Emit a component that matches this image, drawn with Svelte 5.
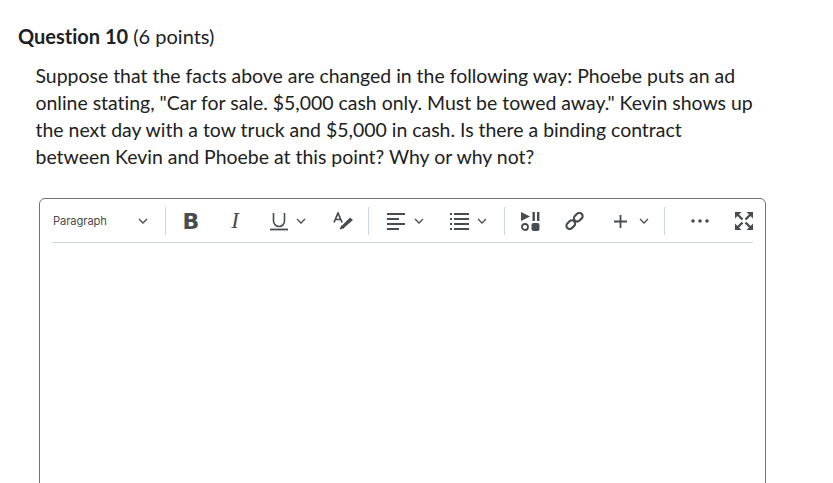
<script>
  let question = 10;
  let points = 6;
</script>

{#snippet chevron()}
  <svg class="chev" width="10" height="6" viewBox="0 0 10 6"><path d="M1 1l4 4 4-4" fill="none" stroke="#494c4e" stroke-width="1.3"/></svg>
{/snippet}

<main class="page">
  <h2 class="title"><b>Question {question}</b> ({points} points)</h2>
  <p class="text">Suppose that the facts above are changed in the following way: Phoebe puts an ad online stating, "Car for sale. $5,000 cash only. Must be towed away." Kevin shows up the next day with a tow truck and $5,000 in cash. Is there a binding contract between Kevin and Phoebe at this point? Why or why not?</p>

  <section class="editor">
    <div class="toolbar">
      <div class="tool para"><span>Paragraph</span>{@render chevron()}</div>
      <i class="sep"></i>

      <div class="tool w-b"><span class="bold">B</span></div>
      <div class="tool w-i"><span class="ital">I</span></div>
      <div class="tool w-u">
        <svg width="18" height="19" viewBox="0 0 18 19"><path d="M3.500 1v8a5.500 5.500 0 0 0 11 0V1" fill="none" stroke="#494c4e" stroke-width="1.600"/><path d="M0 17.500h18" stroke="#494c4e" stroke-width="1.800"/></svg>
        {@render chevron()}
      </div>
      <div class="tool w-a">
        <svg width="20" height="18" viewBox="0 0 20 18"><path d="M1 10.500L5 1l4 9.500M2.500 7.500h5" fill="none" stroke="#494c4e" stroke-width="1.700"/><path d="M17 5.500L9.500 13l-1.500 1-1.500 3.500 4-1 2-2L20 8z" fill="#494c4e"/></svg>
      </div>
      <i class="sep"></i>

      <div class="tool w-al">
        <svg width="18" height="17" viewBox="0 0 18 17"><path d="M0 1h18M0 6h12M0 11h18M0 16h12" stroke="#494c4e" stroke-width="1.800"/></svg>
        {@render chevron()}
      </div>
      <div class="tool w-li">
        <svg width="19" height="17" viewBox="0 0 19 17"><path d="M4 1h15M4 6h15M4 11h15M4 16h15" stroke="#494c4e" stroke-width="1.800"/><path d="M0 1h2M0 6h2M0 11h2M0 16h2" stroke="#494c4e" stroke-width="1.800"/></svg>
        {@render chevron()}
      </div>
      <i class="sep"></i>

      <div class="tool w-me">
        <svg width="19" height="19" viewBox="0 0 19 19"><path d="M0 0l9 4.500L0 9z" fill="#494c4e"/><path d="M11.500 0h2.400v9h-2.400zM16 0h2.400v9H16z" fill="#494c4e"/><circle cx="4" cy="15" r="3" fill="none" stroke="#494c4e" stroke-width="1.800"/><rect x="10.500" y="11" width="8" height="8" rx="2" fill="#494c4e"/></svg>
      </div>
      <div class="tool w-ln">
        <svg width="19" height="18" viewBox="0 0 19 18" fill="none" stroke="#494c4e" stroke-width="2.200"><rect x="1" y="9.500" width="9.500" height="6.500" rx="3.200" transform="rotate(-45 5.700 12.700)"/><rect x="8.500" y="2" width="9.500" height="6.500" rx="3.200" transform="rotate(-45 13.200 5.200)"/></svg>
      </div>
      <div class="tool w-pl">
        <svg width="13" height="13" viewBox="0 0 13 13"><path d="M6.500 0v13M0 6.500h13" stroke="#494c4e" stroke-width="1.800"/></svg>
        {@render chevron()}
      </div>
      <i class="sep"></i>

      <div class="tool w-do">
        <svg width="18" height="4" viewBox="0 0 18 4"><circle cx="2" cy="2" r="1.800" fill="#494c4e"/><circle cx="9" cy="2" r="1.800" fill="#494c4e"/><circle cx="16" cy="2" r="1.800" fill="#494c4e"/></svg>
      </div>
      <div class="tool w-fs">
        <svg width="18" height="18" viewBox="0 0 18 18"><g fill="#494c4e"><path d="M0 0h6.500L0 6.500zM18 0h-6.500L18 6.500zM0 18h6.500L0 11.500zM18 18h-6.500L18 11.500z"/></g><path d="M2.500 2.500l5 5M15.500 2.500l-5 5M2.500 15.500l5-5M15.500 15.500l-5-5" stroke="#494c4e" stroke-width="2.400"/></svg>
      </div>
    </div>
  </section>
</main>

<style>
  :global(body) {
    margin: 0;
    background: #fff;
    overflow: hidden;
  }

  .page {
    height: 483px;
    overflow: hidden;
    font-family: Lato, sans-serif;
    font-variant-ligatures: none;
    color: #202122;
  }

  .title {
    margin: 0;
    padding: 23px 0 0 18px;
    font-size: 20px;
    line-height: 26px;
    font-weight: 400;
  }
  .title b { font-weight: 700; }

  .text {
    margin: 13px 0 0 35.500px;
    width: 722px;
    font-size: 19.450px;
    line-height: 27px;
  }

  .editor {
    margin: 28px 0 0 39px;
    width: 725px;
    height: 400px;
    border: 1px solid #6e7477;
    border-radius: 6px;
    box-sizing: content-box;
  }

  .toolbar {
    display: flex;
    align-items: center;
    height: 44px;
    margin: 0 12px;
    padding-top: 1px;
    border-bottom: 1px solid #cdd5dc;
    box-sizing: border-box;
  }

  .tool {
    display: flex;
    align-items: center;
    justify-content: center;
    flex: none;
    color: #494c4e;
  }

  .sep {
    flex: none;
    width: 1px;
    height: 28px;
    background: #cdd5dc;
  }

  .para {
    width: 113px;
    box-sizing: border-box;
    padding: 0 17px 0 1px;
    justify-content: space-between;
    font-size: 11.200px;
    font-family: Inter, sans-serif;
    letter-spacing: -0.1px;
  }

  .bold { font: 700 22px "DejaVu Sans", sans-serif; }
  .ital { font: italic 400 23px "Liberation Serif", serif; }

  .w-b { width: 50px; }
  .w-i { width: 38px; }
  .w-u { width: 58px; gap: 8px; justify-content: flex-start; padding-left: 16px; box-sizing: border-box; }
  .w-a { width: 56px; padding-left: 5px; box-sizing: border-box; }
  .w-al { width: 66px; gap: 9px; justify-content: flex-start; padding-left: 18px; box-sizing: border-box; }
  .w-li { width: 69px; gap: 8px; justify-content: flex-start; padding-left: 15px; box-sizing: border-box; }
  .w-me { width: 50px; padding-left: 1px; box-sizing: border-box; }
  .w-ln { width: 39px; }
  .w-pl { width: 70px; gap: 12px; justify-content: flex-start; padding-left: 20px; box-sizing: border-box; }
  .w-do { width: 69px; padding-left: 1px; box-sizing: border-box; }
  .w-fs { width: 20px; }
</style>
